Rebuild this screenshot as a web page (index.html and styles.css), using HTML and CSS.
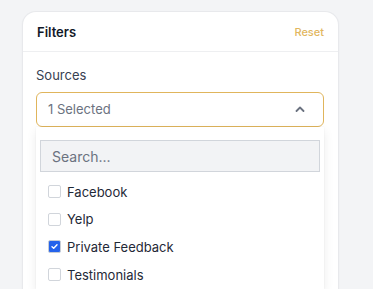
FILE: index.html
```html
<!DOCTYPE html>
<html lang="en">
<head>
    <meta charset="UTF-8">
    <meta name="viewport" content="width=device-width, initial-scale=1.0">
    <title>Filters</title>
    <link rel="stylesheet" href="styles.css">
</head>
<body>
    <div class="card">
        <div class="card-header">
            <span class="title">Filters</span>
            <a class="reset" href="#">Reset</a>
        </div>
        <div class="card-body">
            <label class="field-label">Sources</label>
            <div class="select">
                <span>1 Selected</span>
                <svg class="chevron" width="10" height="6" viewBox="0 0 10 6">
                    <path d="M1.5 5 L5 1.5 L8.5 5" fill="none" stroke="#6b7280" stroke-width="1.8" stroke-linecap="round" stroke-linejoin="round"/>
                </svg>
            </div>
            <div class="dropdown">
                <input class="search" type="text" placeholder="Search...">
                <ul class="options">
                    <li><span class="box"></span>Facebook</li>
                    <li><span class="box"></span>Yelp</li>
                    <li><span class="box checked">
                        <svg width="9" height="9" viewBox="0 0 9 9"><path d="M2 4.7 L3.7 6.3 L7 2.7" fill="none" stroke="#fff" stroke-width="1.4" stroke-linecap="round" stroke-linejoin="round"/></svg>
                    </span>Private Feedback</li>
                    <li><span class="box"></span>Testimonials</li>
                </ul>
            </div>
        </div>
    </div>
</body>
</html>
```

FILE: styles.css
```css
body {
    margin: 0;
    padding: 11px 0 0 22px;
    background-color: #f3f4f6;
    font-family: Inter, "Noto Sans", sans-serif;
    height: 289px;
    box-sizing: border-box;
    overflow: hidden;
}
.card {
    width: 317px;
    height: 278px;
    box-sizing: border-box;
    background: #ffffff;
    border: 1px solid #e8e9ec;
    border-bottom: none;
    border-radius: 14px 14px 0 0;
    box-shadow: 0 1px 2px rgba(0, 0, 0, 0.04);
    overflow: hidden;
}
.card-header {
    display: flex;
    justify-content: space-between;
    align-items: center;
    height: 39px;
    padding: 0 14px 0 14px;
    border-bottom: 1px solid #eeeff1;
}
.title {
    font-size: 13px;
    font-weight: 600;
    color: #111827;
}
.reset {
    font-size: 11px;
    font-weight: 500;
    color: #e2b75f;
    text-decoration: none;
}
.card-body {
    padding: 14px 14px 0 13px;
}
.field-label {
    display: block;
    font-size: 13px;
    line-height: 18px;
    color: #374151;
    margin-bottom: 8px;
}
.select {
    display: flex;
    justify-content: space-between;
    align-items: center;
    height: 35px;
    box-sizing: border-box;
    padding: 0 18px 1px 11px;
    border: 1px solid #e0b55c;
    border-radius: 6px;
    font-size: 13px;
    color: #6b7280;
}
.dropdown {
    background: #ffffff;
    box-shadow: 0 4px 10px rgba(0, 0, 0, 0.08), 0 0 2px rgba(0, 0, 0, 0.05);
    padding: 13px 4px 2px;
}
.search {
    display: block;
    width: 100%;
    height: 32px;
    box-sizing: border-box;
    background: #f2f3f5;
    border: 1px solid #d1d5db;
    border-radius: 0;
    padding: 0 11px;
    font-family: Inter, "Noto Sans", sans-serif;
    font-size: 14px;
    outline: none;
}
.search::placeholder {
    color: #6b7280;
}
.options {
    list-style: none;
    margin: 6px 0 0;
    padding: 0 0 0 8px;
}
.options li {
    display: flex;
    align-items: center;
    height: 27.6px;
    font-size: 13px;
    color: #1f2937;
}
.box {
    width: 13px;
    height: 13px;
    box-sizing: border-box;
    border: 1px solid #d1d5db;
    border-radius: 2px;
    margin-right: 6px;
    display: flex;
    align-items: center;
    justify-content: center;
}
.box.checked {
    background: #2563eb;
    border-color: #c7cdd6;
}
```
